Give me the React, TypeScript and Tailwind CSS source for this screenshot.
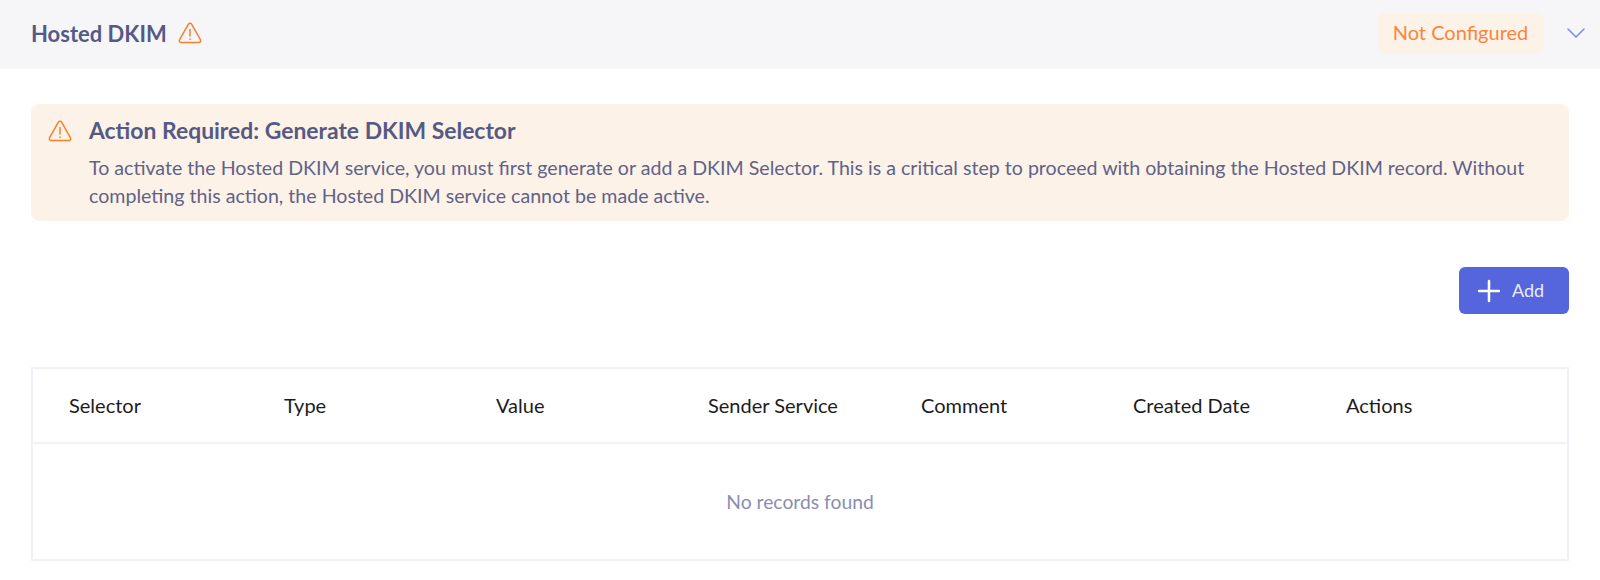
import { ChevronDown, Plus } from "lucide-react";

const columns = ["Selector", "Type", "Value", "Sender Service", "Comment", "Created Date", "Actions"];

function WarningIcon() {
  return (
    <svg width="24" height="22" viewBox="0 0 24 22" fill="none" stroke="#f97f2f" strokeWidth="1.5" strokeLinejoin="round" strokeLinecap="round">
      <path d="M10.4 2.2 1.6 17.6c-.8 1.4.2 3 1.7 3h17.4c1.5 0 2.5-1.6 1.7-3L13.6 2.2c-.7-1.3-2.5-1.3-3.2 0Z" />
      <path d="M12 7.5v6.5" />
      <path d="M12 17v.4" />
    </svg>
  );
}

export default function App() {
  return (
    <div className="w-[1600px] h-[580px] overflow-hidden bg-white font-['Lato','Noto_Sans',sans-serif]">
      <div className="flex h-[69px] items-center justify-between bg-[#f6f6f9] pb-[3px] pl-[31px] pr-[8px]">
        <div className="flex items-center gap-[11px]">
          <span className="text-[22px] font-bold text-[#555a85]">Hosted DKIM</span>
          <WarningIcon />
        </div>
        <div className="flex items-center gap-[16px]">
          <span className="flex h-[41px] w-[167px] items-center justify-center rounded-lg bg-[#fdf2e8] pb-[2px] text-[20px] text-[#f9853c]">
            Not Configured
          </span>
          <ChevronDown className="h-[32px] w-[32px] text-[#7c8cf0]" strokeWidth={1.2} />
        </div>
      </div>

      <div className="px-[31px] pt-[35px]">
        <div className="flex h-[117px] gap-[17px] rounded-lg bg-[#fdf2e8] pl-[17px] pr-[30px] pt-[15px]">
          <div className="shrink-0 pt-[1px]">
            <WarningIcon />
          </div>
          <div>
            <div className="-mt-[2px] text-[22.9px] font-bold leading-[26px] text-[#555a85]">Action Required: Generate DKIM Selector</div>
            <p className="mt-[11px] text-[19.6px] leading-[28px] text-[#5f6388]">
              To activate the Hosted DKIM service, you must first generate or add a DKIM Selector. This is a critical step to proceed with obtaining the Hosted DKIM record. Without completing this action, the Hosted DKIM service cannot be made active.
            </p>
          </div>
        </div>

        <div className="mt-[46px] flex justify-end">
          <button className="flex h-[47px] w-[110px] items-center gap-[6px] rounded-md bg-[#5565dc] pl-[13px] text-[18px] text-[#e9ebff]">
            <Plus className="h-[34px] w-[34px] text-white" strokeWidth={1.8} />
            Add
          </button>
        </div>

        <div className="mt-[53px] h-[194px] border-2 border-[#eff0f8]">
          <div className="grid h-[75px] grid-cols-[215px_212px_212px_213px_212px_213px_1fr] items-center border-b-2 border-[#f2f3fa] pb-[2px] pl-[36px] text-[20px] text-[#1c1c1e]">
            {columns.map((name) => (
              <div key={name}>{name}</div>
            ))}
          </div>
          <div className="flex h-[115px] items-center justify-center pt-[2px] text-[19.3px] text-[#8a8eb0]">No records found</div>
        </div>
      </div>
    </div>
  );
}
